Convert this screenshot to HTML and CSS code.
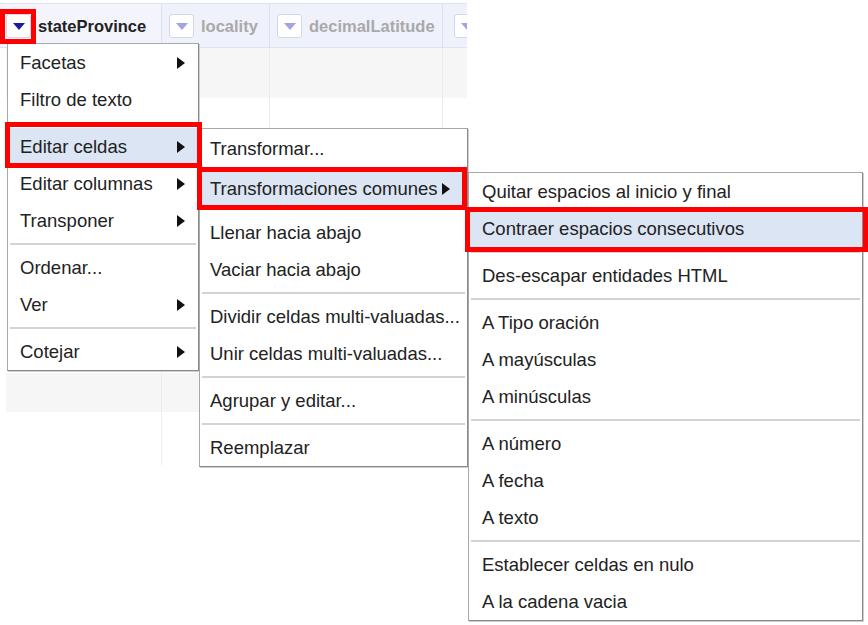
FILE: index.html
```html
<!DOCTYPE html>
<html lang="es">
<head>
<meta charset="utf-8">
<title>Editar celdas</title>
<link rel="stylesheet" href="styles.css">
</head>
<body>
<div class="page">
  <div class="grid">
    <div class="head">
      <div class="hcell"><span class="btn active"><i class="tri"></i></span><span class="label">stateProvince</span></div>
      <div class="hcell"><span class="btn"><i class="tri"></i></span><span class="label dim">locality</span></div>
      <div class="hcell"><span class="btn"><i class="tri"></i></span><span class="label dim">decimalLatitude</span></div>
      <div class="hcell"><span class="btn"><i class="tri"></i></span></div>
    </div>
    <div class="row shade r1"><span></span><span></span><span></span><span></span></div>
    <div class="row r2"><span></span><span></span><span></span><span></span></div>
    <div class="row shade r3"><span></span><span></span><span></span><span></span></div>
    <div class="row r4"><span></span><span></span><span></span><span></span></div>
  </div>

  <div class="menu m1">
    <div class="item">Facetas<i class="arr"></i></div>
    <div class="item">Filtro de texto</div>
    <div class="sep"></div>
    <div class="item hl mark-a">Editar celdas<i class="arr"></i></div>
    <div class="item">Editar columnas<i class="arr"></i></div>
    <div class="item">Transponer<i class="arr"></i></div>
    <div class="sep"></div>
    <div class="item">Ordenar...</div>
    <div class="item">Ver<i class="arr"></i></div>
    <div class="sep"></div>
    <div class="item">Cotejar<i class="arr"></i></div>
  </div>

  <div class="menu m2">
    <div class="item tall">Transformar...</div>
    <div class="item tall hl inline mark-b">Transformaciones comunes<i class="arr"></i></div>
    <div class="item gap">Llenar hacia abajo</div>
    <div class="item">Vaciar hacia abajo</div>
    <div class="sep"></div>
    <div class="item">Dividir celdas multi-valuadas...</div>
    <div class="item">Unir celdas multi-valuadas...</div>
    <div class="sep"></div>
    <div class="item">Agrupar y editar...</div>
    <div class="sep"></div>
    <div class="item">Reemplazar</div>
  </div>

  <div class="menu m3">
    <div class="item">Quitar espacios al inicio y final</div>
    <div class="item hl mark-c">Contraer espacios consecutivos</div>
    <div class="sep"></div>
    <div class="item">Des-escapar entidades HTML</div>
    <div class="sep"></div>
    <div class="item">A Tipo oración</div>
    <div class="item">A mayúsculas</div>
    <div class="item">A minúsculas</div>
    <div class="sep"></div>
    <div class="item">A número</div>
    <div class="item">A fecha</div>
    <div class="item">A texto</div>
    <div class="sep"></div>
    <div class="item">Establecer celdas en nulo</div>
    <div class="item">A la cadena vacia</div>
  </div>
</div>
</body>
</html>
```

FILE: styles.css
```css
* { box-sizing: border-box; }

html, body {
  margin: 0;
  padding: 0;
  background: #ffffff;
}

body {
  font-family: "Liberation Sans", Arial, sans-serif;
  color: #222222;
}

.page {
  position: relative;
  width: 868px;
  height: 625px;
  overflow: hidden;
}

/* background data table */
.grid {
  padding-top: 3px;
  width: 467px;
}

.head {
  display: grid;
  grid-template-columns: 162px 108px 173px 24px;
  height: 45px;
  background: #eff1fb;
  border-top: 1px solid #e2e5f4;
  border-bottom: 1px solid #dfe2f3;
}

.hcell {
  display: flex;
  align-items: center;
  gap: 7px;
  padding-left: 7px;
  border-right: 1px solid #dde0f1;
  overflow: hidden;
  white-space: nowrap;
}

.hcell:first-child { background: #f3f4fc; padding-left: 6px; }
.hcell:last-child { border-right: none; padding-left: 11px; }

.btn {
  position: relative;
  flex: none;
  display: flex;
  align-items: center;
  justify-content: center;
  width: 25px;
  height: 24px;
  background: #ffffff;
  border: 1px solid #d3d6ef;
  border-radius: 3px;
}

.tri {
  width: 0;
  height: 0;
  border-left: 6px solid transparent;
  border-right: 6px solid transparent;
  border-top: 7px solid #a3a3e4;
  margin-top: 1px;
}

.btn.active .tri { border-top-color: #1b1ba6; }

.btn.active::after {
  content: "";
  position: absolute;
  left: -7px;
  right: -6px;
  top: -6px;
  bottom: -7px;
  border: 5px solid #ff0000;
  z-index: 10;
}

.label {
  font-weight: bold;
  font-size: 16.5px;
  color: #222222;
  padding-top: 1px;
}

.label.dim { color: #a9a9a9; }

.row {
  display: grid;
  grid-template-columns: 156px 108px 173px 24px;
  margin-left: 6px;
}

.row span { border-right: 1px solid #ececec; }
.row span:last-child { border-right: none; }

.shade { background: #f6f6f6; }
.r1 { height: 50px; }
.r2 { height: 275px; }
.r3 { height: 39px; }
.r4 { height: 53px; }

/* dropdown menus */
.menu {
  position: absolute;
  display: flex;
  flex-direction: column;
  background: #ffffff;
  border: 1px solid #a8a8a8;
  border-right-color: #8a8a8a;
  border-bottom-color: #8a8a8a;
  box-shadow: 1px 1px 0 #cfcfcf;
  font-size: 18.5px;
  color: #222222;
}

.m1 { left: 7px; top: 43px; width: 192px; }
.m2 { left: 199px; top: 128px; width: 269px; }
.m3 { left: 468px; top: 172px; width: 395px; }

.item {
  position: relative;
  display: flex;
  align-items: center;
  justify-content: space-between;
  height: 37px;
  padding: 0 13px 0 12px;
  white-space: nowrap;
}

.m2 .item { padding-left: 10px; }
.m3 .item { padding-left: 13px; }

.item.tall { height: 40px; }
.item.gap { margin-top: 5px; }
.item.inline { justify-content: flex-start; gap: 4px; }

.item.hl { background: #dbe5f4; }

.arr {
  flex: none;
  width: 0;
  height: 0;
  border-top: 6px solid transparent;
  border-bottom: 6px solid transparent;
  border-left: 8px solid #111111;
}

.sep {
  height: 2px;
  margin: 4px 2px;
  background: #d3d3d3;
}

.mark-a::after,
.mark-b::after,
.mark-c::after {
  content: "";
  position: absolute;
  border: 5px solid #ff0000;
  z-index: 10;
}

.mark-a::after { left: -3px; right: -4px; top: -6px; bottom: -3px; }
.mark-b::after { left: -3px; right: 0; top: -2px; bottom: -1px; }
.mark-c::after { left: -4px; right: -6px; top: -3px; bottom: -5px; }
```
